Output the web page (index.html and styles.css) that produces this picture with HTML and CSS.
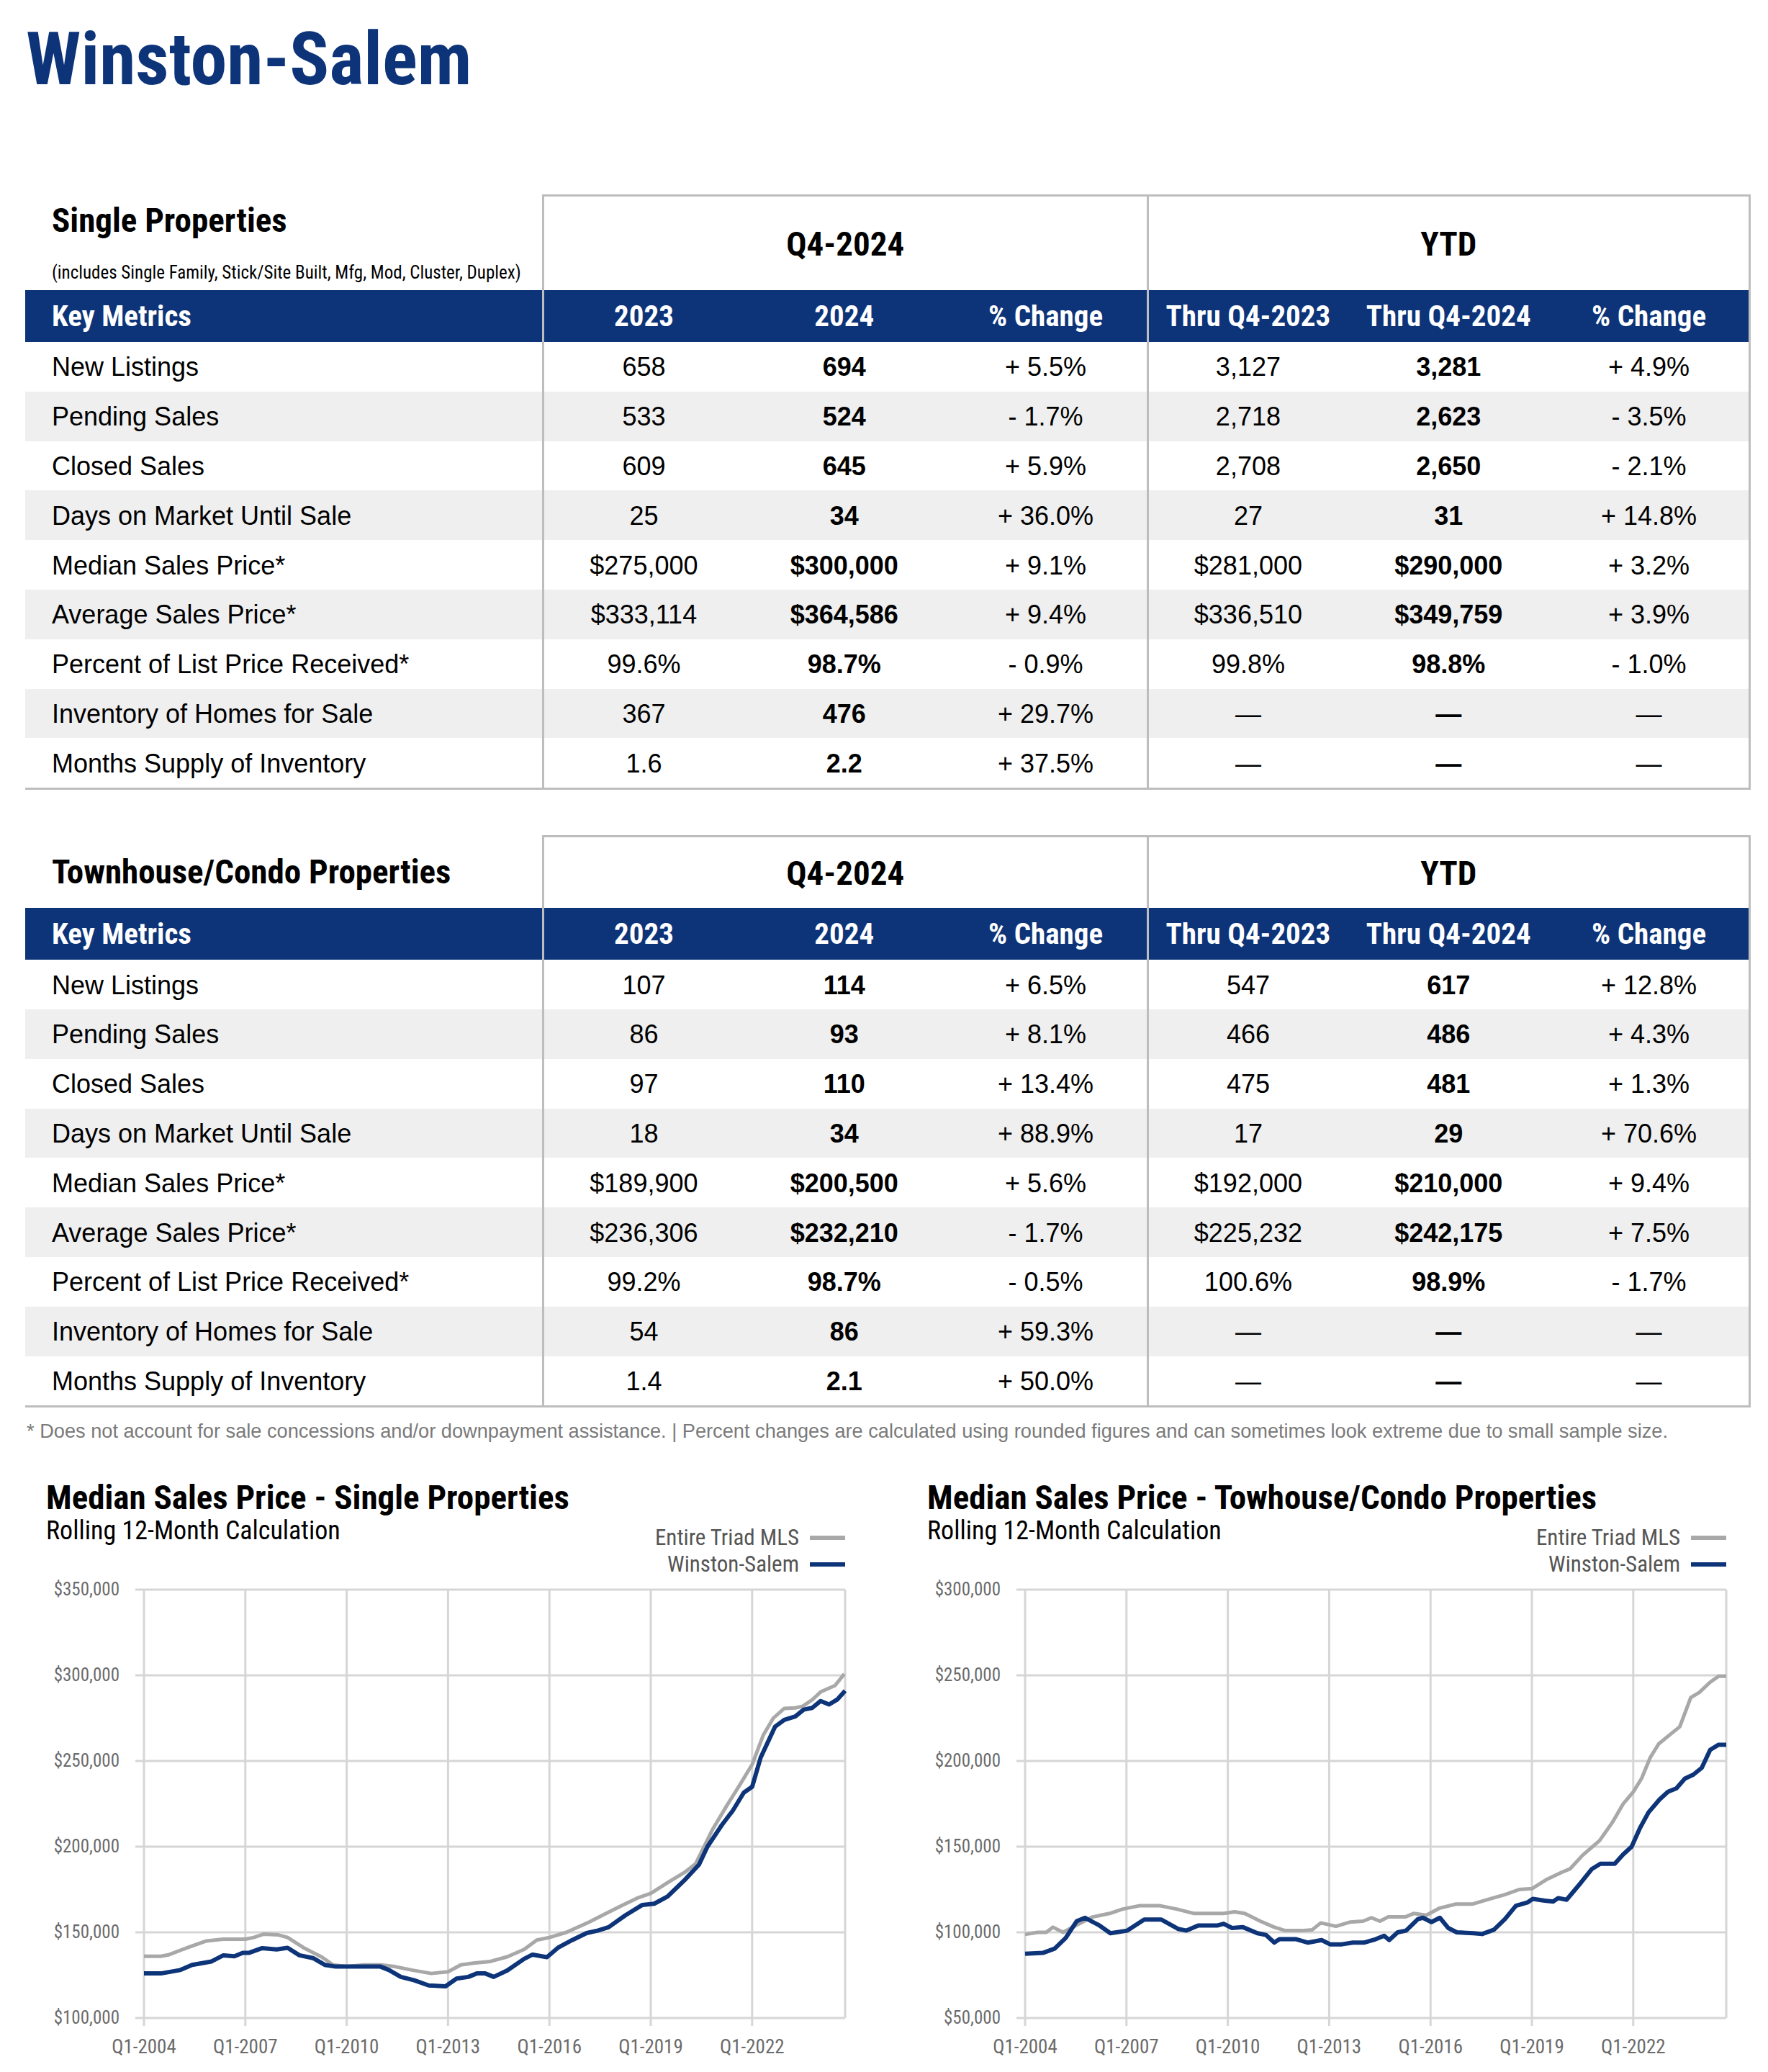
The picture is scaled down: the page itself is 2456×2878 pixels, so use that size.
FILE: index.html
```html
<!DOCTYPE html>
<html lang="en">
<head>
<meta charset="utf-8">
<title>Winston-Salem</title>
<link rel="stylesheet" href="styles.css">
</head>
<body>
<div class="page">
  <h1 class="city">Winston-Salem</h1>

  <section class="metrics metrics-single">
    <div class="mhead">
      <div class="mtitle">
        <h2>Single Properties</h2>
        <p class="incl">(includes Single Family, Stick/Site Built, Mfg, Mod, Cluster, Duplex)</p>
      </div>
      <div class="grp">Q4-2024</div>
      <div class="grp grp-ytd">YTD</div>
    </div>
    <div class="row hdr"><div class="c lbl">Key Metrics</div><div class="c q1">2023</div><div class="c">2024</div><div class="c">% Change</div><div class="c y1">Thru Q4-2023</div><div class="c">Thru Q4-2024</div><div class="c last">% Change</div></div>
    <div class="row"><div class="c lbl">New Listings</div><div class="c q1">658</div><div class="c b">694</div><div class="c">+ 5.5%</div><div class="c y1">3,127</div><div class="c b">3,281</div><div class="c last">+ 4.9%</div></div>
    <div class="row alt"><div class="c lbl">Pending Sales</div><div class="c q1">533</div><div class="c b">524</div><div class="c">- 1.7%</div><div class="c y1">2,718</div><div class="c b">2,623</div><div class="c last">- 3.5%</div></div>
    <div class="row"><div class="c lbl">Closed Sales</div><div class="c q1">609</div><div class="c b">645</div><div class="c">+ 5.9%</div><div class="c y1">2,708</div><div class="c b">2,650</div><div class="c last">- 2.1%</div></div>
    <div class="row alt"><div class="c lbl">Days on Market Until Sale</div><div class="c q1">25</div><div class="c b">34</div><div class="c">+ 36.0%</div><div class="c y1">27</div><div class="c b">31</div><div class="c last">+ 14.8%</div></div>
    <div class="row"><div class="c lbl">Median Sales Price*</div><div class="c q1">$275,000</div><div class="c b">$300,000</div><div class="c">+ 9.1%</div><div class="c y1">$281,000</div><div class="c b">$290,000</div><div class="c last">+ 3.2%</div></div>
    <div class="row alt"><div class="c lbl">Average Sales Price*</div><div class="c q1">$333,114</div><div class="c b">$364,586</div><div class="c">+ 9.4%</div><div class="c y1">$336,510</div><div class="c b">$349,759</div><div class="c last">+ 3.9%</div></div>
    <div class="row"><div class="c lbl">Percent of List Price Received*</div><div class="c q1">99.6%</div><div class="c b">98.7%</div><div class="c">- 0.9%</div><div class="c y1">99.8%</div><div class="c b">98.8%</div><div class="c last">- 1.0%</div></div>
    <div class="row alt"><div class="c lbl">Inventory of Homes for Sale</div><div class="c q1">367</div><div class="c b">476</div><div class="c">+ 29.7%</div><div class="c y1">—</div><div class="c b">—</div><div class="c last">—</div></div>
    <div class="row"><div class="c lbl">Months Supply of Inventory</div><div class="c q1">1.6</div><div class="c b">2.2</div><div class="c">+ 37.5%</div><div class="c y1">—</div><div class="c b">—</div><div class="c last">—</div></div>
  </section>

  <section class="metrics metrics-condo">
    <div class="mhead mhead-short">
      <div class="mtitle mtitle-center">
        <h2>Townhouse/Condo Properties</h2>
      </div>
      <div class="grp">Q4-2024</div>
      <div class="grp grp-ytd">YTD</div>
    </div>
    <div class="row hdr"><div class="c lbl">Key Metrics</div><div class="c q1">2023</div><div class="c">2024</div><div class="c">% Change</div><div class="c y1">Thru Q4-2023</div><div class="c">Thru Q4-2024</div><div class="c last">% Change</div></div>
    <div class="row"><div class="c lbl">New Listings</div><div class="c q1">107</div><div class="c b">114</div><div class="c">+ 6.5%</div><div class="c y1">547</div><div class="c b">617</div><div class="c last">+ 12.8%</div></div>
    <div class="row alt"><div class="c lbl">Pending Sales</div><div class="c q1">86</div><div class="c b">93</div><div class="c">+ 8.1%</div><div class="c y1">466</div><div class="c b">486</div><div class="c last">+ 4.3%</div></div>
    <div class="row"><div class="c lbl">Closed Sales</div><div class="c q1">97</div><div class="c b">110</div><div class="c">+ 13.4%</div><div class="c y1">475</div><div class="c b">481</div><div class="c last">+ 1.3%</div></div>
    <div class="row alt"><div class="c lbl">Days on Market Until Sale</div><div class="c q1">18</div><div class="c b">34</div><div class="c">+ 88.9%</div><div class="c y1">17</div><div class="c b">29</div><div class="c last">+ 70.6%</div></div>
    <div class="row"><div class="c lbl">Median Sales Price*</div><div class="c q1">$189,900</div><div class="c b">$200,500</div><div class="c">+ 5.6%</div><div class="c y1">$192,000</div><div class="c b">$210,000</div><div class="c last">+ 9.4%</div></div>
    <div class="row alt"><div class="c lbl">Average Sales Price*</div><div class="c q1">$236,306</div><div class="c b">$232,210</div><div class="c">- 1.7%</div><div class="c y1">$225,232</div><div class="c b">$242,175</div><div class="c last">+ 7.5%</div></div>
    <div class="row"><div class="c lbl">Percent of List Price Received*</div><div class="c q1">99.2%</div><div class="c b">98.7%</div><div class="c">- 0.5%</div><div class="c y1">100.6%</div><div class="c b">98.9%</div><div class="c last">- 1.7%</div></div>
    <div class="row alt"><div class="c lbl">Inventory of Homes for Sale</div><div class="c q1">54</div><div class="c b">86</div><div class="c">+ 59.3%</div><div class="c y1">—</div><div class="c b">—</div><div class="c last">—</div></div>
    <div class="row"><div class="c lbl">Months Supply of Inventory</div><div class="c q1">1.4</div><div class="c b">2.1</div><div class="c">+ 50.0%</div><div class="c y1">—</div><div class="c b">—</div><div class="c last">—</div></div>
  </section>

  <p class="note">* Does not account for sale concessions and/or downpayment assistance. | Percent changes are calculated using rounded figures and can sometimes look extreme due to small sample size.</p>

  <div class="charts">
    <div class="chart">
      <h3 class="ctitle">Median Sales Price - Single Properties</h3>
      <div class="csub-row">
        <p class="csub">Rolling 12-Month Calculation</p>
        <ul class="legend">
          <li><span>Entire Triad MLS</span><i class="sw sw-gray"></i></li>
          <li><span>Winston-Salem</span><i class="sw sw-blue"></i></li>
        </ul>
      </div>
      <svg class="plot" width="1112" height="685" viewBox="0 0 1112 685">
        <g class="grid">
          <line x1="124" y1="17" x2="1110" y2="17"/>
          <line x1="124" y1="136" x2="1110" y2="136"/>
          <line x1="124" y1="255" x2="1110" y2="255"/>
          <line x1="124" y1="374" x2="1110" y2="374"/>
          <line x1="124" y1="493" x2="1110" y2="493"/>
          <line x1="124" y1="612" x2="1110" y2="612"/>
          <line x1="136" y1="17" x2="136" y2="623"/>
          <line x1="276.8" y1="17" x2="276.8" y2="623"/>
          <line x1="417.6" y1="17" x2="417.6" y2="623"/>
          <line x1="558.4" y1="17" x2="558.4" y2="623"/>
          <line x1="699.2" y1="17" x2="699.2" y2="623"/>
          <line x1="840" y1="17" x2="840" y2="623"/>
          <line x1="980.8" y1="17" x2="980.8" y2="623"/>
          <line x1="1110" y1="17" x2="1110" y2="612"/>
        </g>
        <g class="ylab">
          <text x="102" y="25">$350,000</text>
          <text x="102" y="144">$300,000</text>
          <text x="102" y="263">$250,000</text>
          <text x="102" y="382">$200,000</text>
          <text x="102" y="501">$150,000</text>
          <text x="102" y="620">$100,000</text>
        </g>
        <g class="xlab">
          <text x="136" y="661">Q1-2004</text>
          <text x="276.8" y="661">Q1-2007</text>
          <text x="417.6" y="661">Q1-2010</text>
          <text x="558.4" y="661">Q1-2013</text>
          <text x="699.2" y="661">Q1-2016</text>
          <text x="840" y="661">Q1-2019</text>
          <text x="980.8" y="661">Q1-2022</text>
        </g>
        <g transform="translate(136 612) scale(11.735 -2.38) translate(0 -100)">
          <polyline class="ln ln-gray" points="0,136 2,136 3,137 5,140.8 7.4,145 9.4,146 12,146 13,147 14.2,149 15.9,148.5 17,147 18.9,141 21,135.7 22.4,131 24,130 26,131 28,131 29.7,130 31.7,128 34,126 36,127 37.5,131 39,132 41,133 43,135.7 45,140 46.5,145.5 48,147 50,150 52.7,156 54.7,161 56.7,166 58.4,170 60,172.7 62,179 64,185 65.3,190 66.3,200 67.3,210 69,224 70.6,236.6 72,248 73.3,265 74.5,275 75.8,280.7 77.1,281 78,282 79.1,285.7 80.1,290.3 81.8,294 82.9,300.8"/>
          <polyline class="ln ln-blue" points="0,126 2,126 4.3,128 5.7,131 8,133 9.4,136.6 10.7,136 11.7,138 12.4,138 14,140.8 15.7,140 17,141 18.4,136.6 20,135 21.4,131 22.7,130 24,130 28,130 29,128 30.4,124 32,122 33.7,119 35.7,118.5 37,123 38.4,124 39.4,126 40.4,126 41.4,124 43,127.7 45,134.5 46,137 47.7,135.5 49,141 50.7,145.5 52.4,149.6 53.7,151 55,153 57,160 59,166 60.4,166.7 62,171 64,180.5 65.7,189.5 66.7,200 68.4,212.6 69.7,221 71,231.5 72,235 73,252 74.7,270 75.8,274 77.1,276 78.1,280 79.1,281 80.1,285 81.1,283 82.1,286 83,291"/>
        </g>
      </svg>
    </div>

    <div class="chart">
      <h3 class="ctitle">Median Sales Price - Towhouse/Condo Properties</h3>
      <div class="csub-row">
        <p class="csub">Rolling 12-Month Calculation</p>
        <ul class="legend">
          <li><span>Entire Triad MLS</span><i class="sw sw-gray"></i></li>
          <li><span>Winston-Salem</span><i class="sw sw-blue"></i></li>
        </ul>
      </div>
      <svg class="plot" width="1112" height="685" viewBox="0 0 1112 685">
        <g class="grid">
          <line x1="124" y1="17" x2="1110" y2="17"/>
          <line x1="124" y1="136" x2="1110" y2="136"/>
          <line x1="124" y1="255" x2="1110" y2="255"/>
          <line x1="124" y1="374" x2="1110" y2="374"/>
          <line x1="124" y1="493" x2="1110" y2="493"/>
          <line x1="124" y1="612" x2="1110" y2="612"/>
          <line x1="136" y1="17" x2="136" y2="623"/>
          <line x1="276.8" y1="17" x2="276.8" y2="623"/>
          <line x1="417.6" y1="17" x2="417.6" y2="623"/>
          <line x1="558.4" y1="17" x2="558.4" y2="623"/>
          <line x1="699.2" y1="17" x2="699.2" y2="623"/>
          <line x1="840" y1="17" x2="840" y2="623"/>
          <line x1="980.8" y1="17" x2="980.8" y2="623"/>
          <line x1="1110" y1="17" x2="1110" y2="612"/>
        </g>
        <g class="ylab">
          <text x="102" y="25">$300,000</text>
          <text x="102" y="144">$250,000</text>
          <text x="102" y="263">$200,000</text>
          <text x="102" y="382">$150,000</text>
          <text x="102" y="501">$100,000</text>
          <text x="102" y="620">$50,000</text>
        </g>
        <g class="xlab">
          <text x="136" y="661">Q1-2004</text>
          <text x="276.8" y="661">Q1-2007</text>
          <text x="417.6" y="661">Q1-2010</text>
          <text x="558.4" y="661">Q1-2013</text>
          <text x="699.2" y="661">Q1-2016</text>
          <text x="840" y="661">Q1-2019</text>
          <text x="980.8" y="661">Q1-2022</text>
        </g>
        <g transform="translate(136 612) scale(11.735 -2.38) translate(0 -50)">
          <polyline class="ln ln-gray" points="0,98.8 1.5,100 2.5,100 3.3,103 4.5,100 6,104 8,109 10,111 11.5,113.5 13.5,115.5 16,115.5 18,113.5 20,111 22,111 23.5,111 24.8,112 26,111 27.8,106.6 29.5,103 30.8,101 32.8,101 34,101.5 35,105.5 36.8,103.5 38.5,106 40,106.5 41,108.5 42,106.5 43,109 45,109 46,111 47.5,110 49,114 51,116.5 53,116.5 55,119.5 56.8,122 58.5,125 60,125.5 61.8,131 63.5,135 64.5,137 66,145 68,153.5 69.5,164 70.8,175 72,182 73,190 74,202 75,210 76.5,216 77.5,220 78.8,237 79.8,240 81.1,246 82.1,249.5 83,249.5"/>
          <polyline class="ln ln-blue" points="0,87.5 2.1,88 3.5,90.5 4.8,96.7 6.1,106.5 7.1,108.5 8.8,104 10.1,99.5 12.1,101 14.1,107.5 16.1,107.5 18.1,102 19.1,101 20.5,104 22.8,104 23.5,105 24.5,102.5 25.8,103 27.5,99.5 28.5,98.5 29.5,94 30.1,96 32.1,96 33.5,94 35.1,95.5 36.1,93 37.5,93 38.8,94 40.1,94 41.5,96 42.5,98 43.1,95.5 44.1,100 45.1,101 46.5,107.7 47.1,108.5 48.1,106 49.1,108.5 50.1,102.5 51.1,100 53.1,99.5 54.1,99 55.5,101.5 56.8,107.7 58.1,115.5 59.5,117.5 60.1,119.5 61.5,118.5 62.5,118 63.1,120 64.1,119 65.8,129 67.1,137 68.1,140 69.8,140 70.8,145.5 71.8,150 72.8,161 73.8,170 75.1,177.5 76.1,182 77.1,184 78.1,189.7 79.1,192 80.1,196 81.1,206.5 82.1,209.5 83,209.5"/>
        </g>
      </svg>
    </div>
  </div>
</div>
</body>
</html>
```

FILE: styles.css
```css
:root {
  --navy: #0d3479;
  --rule: #bdbdbd;
  --narrow: "Liberation Sans Narrow", "Arial Narrow", "Roboto Condensed", "DejaVu Sans Condensed", "DejaVu Sans", "Liberation Sans", sans-serif;
  --sans: "Liberation Sans", Arial, sans-serif;
}

* { box-sizing: border-box; }

html, body {
  margin: 0;
  padding: 0;
  background: #ffffff;
}

body {
  font-family: var(--sans);
  color: #000;
}

.page {
  width: 2456px;
  height: 2878px;
  overflow: hidden;
}

.city {
  margin: 30px 0 0 36px;
  font-family: var(--narrow);
  font-stretch: condensed;
  font-weight: 700;
  font-size: 102px;
  line-height: 104px;
  color: var(--navy);
}

/* ---------- metrics tables ---------- */
.metrics {
  width: 2397px;
  margin-left: 35px;
  border-bottom: 3px solid var(--rule);
}
.metrics-single { margin-top: 136px; }
.metrics-condo { margin-top: 63px; }

.mhead {
  display: grid;
  grid-template-columns: 718px 1fr 1fr;
  height: 133px;
}
.mhead-short { height: 101px; }

.mtitle {
  padding: 12px 0 0 37px;
}
.mtitle h2 {
  margin: 0;
  font-family: var(--narrow);
  font-stretch: condensed;
  font-weight: 700;
  font-size: 47px;
  line-height: 47px;
}
.mtitle .incl {
  margin: 37px 0 0;
  font-family: var(--narrow);
  font-stretch: condensed;
  font-size: 25px;
  line-height: 26px;
  white-space: nowrap;
}
.mtitle-center {
  padding-top: 0;
  display: flex;
  align-items: center;
}

.grp {
  border-top: 3px solid var(--rule);
  border-left: 3px solid var(--rule);
  display: flex;
  align-items: center;
  justify-content: center;
  font-family: var(--narrow);
  font-stretch: condensed;
  font-weight: 700;
  font-size: 47px;
}
.grp-ytd { border-right: 3px solid var(--rule); }

.row {
  display: grid;
  grid-template-columns: 718px repeat(6, 1fr);
  height: 68.8px;
  font-size: 36px;
}
.row.alt { background: #efefef; }

.row.hdr {
  height: 72px;
  background: var(--navy);
  color: #fff;
  font-family: var(--narrow);
  font-stretch: condensed;
  font-weight: 700;
  font-size: 41px;
}

.c {
  display: flex;
  align-items: center;
  justify-content: center;
  white-space: nowrap;
}
.row:not(.hdr) .c { padding-top: 2px; }
.c.lbl {
  justify-content: flex-start;
  padding-left: 37px;
}
.c.b { font-weight: 700; }
.c.q1, .c.y1 { border-left: 3px solid var(--rule); }
.c.last { border-right: 3px solid var(--rule); }

.note {
  margin: 19px 0 0 37px;
  font-size: 27.2px;
  line-height: 27px;
  color: #7a7a7a;
  white-space: nowrap;
}

/* ---------- charts ---------- */
.charts {
  display: flex;
  gap: 112px;
  margin: 55px 0 0 64px;
}
.chart {
  width: 1112px;
  flex: none;
}
.ctitle {
  margin: 0;
  font-family: var(--narrow);
  font-stretch: condensed;
  font-weight: 700;
  font-size: 47px;
  line-height: 47px;
  white-space: nowrap;
}
.csub-row {
  display: flex;
  justify-content: space-between;
  align-items: flex-start;
}
.csub {
  margin: 5px 0 0;
  font-family: var(--narrow);
  font-stretch: condensed;
  font-size: 36px;
  line-height: 36px;
}
.legend {
  list-style: none;
  margin: 14px 2px 0 0;
  padding: 0;
  font-family: var(--narrow);
  font-stretch: condensed;
  font-size: 31px;
  line-height: 37px;
  color: #555;
}
.legend li {
  display: flex;
  align-items: center;
  justify-content: flex-end;
}
.sw {
  display: block;
  width: 49px;
  height: 6px;
  margin-left: 15px;
}
.sw-gray { background: #a8a8a8; }
.sw-blue { background: var(--navy); }

.plot {
  display: block;
}
.grid line {
  stroke: #d6d6d6;
  stroke-width: 3;
}
.ylab text {
  font-family: var(--narrow);
  font-stretch: condensed;
  font-size: 25px;
  fill: #6b6b6b;
  text-anchor: end;
}
.xlab text {
  font-family: var(--narrow);
  font-stretch: condensed;
  font-size: 27px;
  fill: #6b6b6b;
  text-anchor: middle;
}
.ln {
  fill: none;
  vector-effect: non-scaling-stroke;
  stroke-linejoin: round;
  stroke-linecap: butt;
}
.ln-gray { stroke: #a8a8a8; stroke-width: 5; }
.ln-blue { stroke: var(--navy); stroke-width: 6; }
```
